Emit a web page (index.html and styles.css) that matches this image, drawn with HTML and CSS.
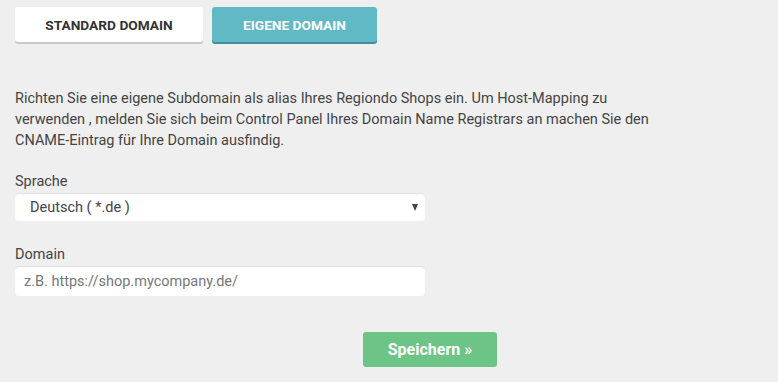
FILE: index.html
```html
<!DOCTYPE html>
<html lang="de">
<head>
    <meta charset="UTF-8">
    <title>Domain</title>
    <link rel="stylesheet" href="styles.css">
</head>
<body>
    <div class="tabs">
        <button class="tab">Standard Domain</button>
        <button class="tab active">Eigene Domain</button>
    </div>

    <p class="intro">Richten Sie eine eigene Subdomain als alias Ihres Regiondo Shops ein. Um Host-Mapping zu verwenden , melden Sie sich beim Control Panel Ihres Domain Name Registrars an machen Sie den CNAME-Eintrag für Ihre Domain ausfindig.</p>

    <div class="field">
        <label for="lang">Sprache</label>
        <div class="select-wrap">
            <select id="lang">
                <option>Deutsch ( *.de )</option>
            </select>
        </div>
    </div>

    <div class="field">
        <label for="domain">Domain</label>
        <input id="domain" type="text" placeholder="z.B. https://shop.mycompany.de/">
    </div>

    <div class="actions">
        <button class="save">Speichern »</button>
    </div>
</body>
</html>
```

FILE: styles.css
```css
body {
    margin: 0;
    padding: 7px 15px;
    background: #efefef;
    font-family: Roboto, "Liberation Sans", sans-serif;
    color: #444;
}

.tabs {
    display: flex;
    gap: 9px;
}

.tab {
    height: 35px;
    border: none;
    border-radius: 3px;
    font-family: inherit;
    font-size: 13.7px;
    font-weight: bold;
    text-transform: uppercase;
    cursor: pointer;
    background: #fff;
    color: #333;
    width: 188px;
    box-shadow: 0 2px 0 #c8c8c8;
}

.tab.active {
    width: 165px;
    background: #62b9c6;
    color: #fff;
    box-shadow: 0 2px 0 #3f8f9c;
}

.intro {
    margin: 46px 0 0;
    max-width: 650px;
    font-size: 14.5px;
    line-height: 21px;
}

.field {
    width: 410px;
    margin-top: 22px;
}

.field + .field {
    margin-top: 25px;
}

.field label {
    display: block;
    font-size: 14.5px;
    line-height: 18px;
    margin-bottom: 2px;
    color: #444;
}

.select-wrap {
    position: relative;
}

.select-wrap::after {
    content: "";
    position: absolute;
    right: 7px;
    top: 11px;
    border-left: 3px solid transparent;
    border-right: 3px solid transparent;
    border-top: 7px solid #444;
    pointer-events: none;
}

select, input {
    display: block;
    width: 100%;
    box-sizing: border-box;
    border: none;
    border-radius: 4px;
    background: #fff;
    font-family: inherit;
    font-size: 14.5px;
    color: #444;
    box-shadow: inset 0 1px 1px #ddd;
    outline: none;
}

select {
    height: 28px;
    padding: 0 15px;
    appearance: none;
    -webkit-appearance: none;
}

input {
    height: 30px;
    padding: 0 9px;
}

input::placeholder {
    color: #777;
}

.actions {
    width: 830px;
    max-width: 100%;
    display: flex;
    justify-content: center;
    margin-top: 36px;
}

.save {
    width: 134px;
    height: 35px;
    border: none;
    border-radius: 3px;
    background: #6cc486;
    color: #fff;
    font-family: inherit;
    font-size: 16px;
    font-weight: bold;
    cursor: pointer;
    margin-left: 82px;
}
```
